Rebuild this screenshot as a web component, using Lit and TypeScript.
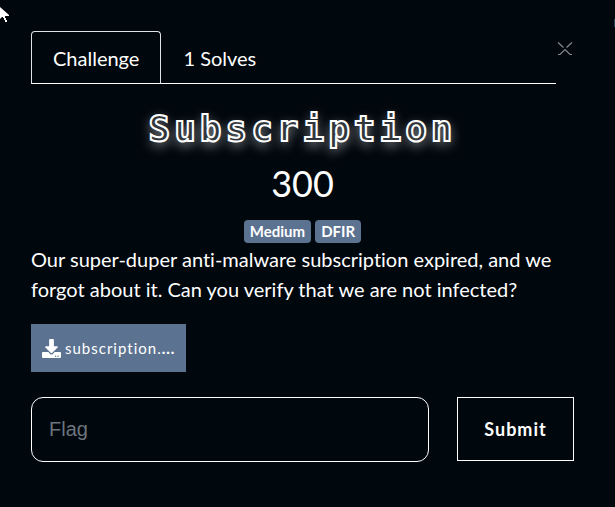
import { LitElement, html, css, svg } from "lit";
import { customElement, state } from "lit/decorators.js";

@customElement("app-root")
export class AppRoot extends LitElement {
  @state() private tab = "challenge";

  static styles = css`
    :host {
      display: block;
      box-sizing: border-box;
      min-height: 100vh;
      position: relative;
      padding: 31px 41px 45px 31px;
      background: #00070d;
      color: #fff;
      font: 20px/30px Lato, "Open Sans", sans-serif;
      font-variant-ligatures: none;
    }
    * { box-sizing: border-box; }
    button { font: inherit; font-variant-ligatures: none; color: inherit; background: none; cursor: pointer; }
    .cursor { position: absolute; left: 0; top: 6px; width: 10px; height: 17px; }
    .edge { position: absolute; right: 0; top: 19px; width: 1px; height: 8px; background: #24445a; }
    .top { display: flex; align-items: flex-start; }
    .tabs { display: flex; flex: 1; border-bottom: 1px solid #fff; }
    .tab {
      height: 53px;
      margin: 0 0 -1px;
      padding: 0 21px;
      border: 1px solid transparent;
      border-radius: 4px 4px 0 0;
    }
    .tab.active { border-color: #dee2e6 #dee2e6 #fff; }
    .close { width: 18px; height: 36px; margin: 0; padding: 0; border: 0; line-height: 0; }
    .close svg { width: 16px; height: 16px; }
    h1 {
      margin: 20px 0 0;
      font: bold 36px/50px "DejaVu Sans Mono", monospace;
      letter-spacing: 4px;
      text-align: center;
      color: #30363b;
      -webkit-text-stroke: 2px #fff;
      text-shadow: 0 4px 12px rgba(255, 255, 255, 0.6);
    }
    .points { margin: 7px 0 0; font-size: 36px; line-height: 44px; font-weight: 400; text-align: center; }
    .tags { display: flex; justify-content: center; gap: 4px; margin-top: 15px; }
    .tag { padding: 0 6px; border-radius: 4px; background: #5b7290; font-size: 15px; line-height: 23px; font-weight: 700; }
    p { margin: 1px 0 20px; }
    .file {
      display: inline-flex;
      align-items: center;
      gap: 4px;
      height: 48px;
      padding: 0 11px;
      background: #5b7290;
      color: #fff;
      font-size: 15px;
      letter-spacing: 1px;
      text-decoration: none;
    }
    .file b { font-weight: 900; }
    .file svg { width: 19px; height: 19px; }
    form { display: grid; grid-template-columns: minmax(0, 1fr) 117px; gap: 28px; margin-top: 25px; align-items: start; }
    input {
      width: 100%;
      height: 65px;
      padding: 0 17px;
      border: 1px solid #fff;
      border-radius: 12px;
      background: transparent;
      color: #fff;
      font: 20px "Liberation Sans", sans-serif;
    }
    input::placeholder { color: #6c757d; opacity: 1; }
    .submit { height: 64px; padding: 0; border: 1px solid #fff; font-size: 18px; font-weight: 700; letter-spacing: 1px; }
  `;

  private renderTab(id: string, label: string) {
    const on = this.tab === id;
    return html`<button class="tab ${on ? "active" : ""}" role="tab" aria-selected=${on}
      @click=${() => (this.tab = id)}>${label}</button>`;
  }

  render() {
    return html`
      <svg class="cursor" viewBox="0 0 10 17" aria-hidden="true">
        ${svg`<path fill="#fff" d="M0 1L9 9V10H5V12H6V14H7V16H5V14H4V12H3V11H2L0 13Z"/>`}
      </svg>
      <span class="edge"></span>
      <div class="top">
        <div class="tabs" role="tablist">
          ${this.renderTab("challenge", "Challenge")}${this.renderTab("solves", "1 Solves")}
        </div>
        <button class="close" aria-label="Close">
          <svg viewBox="0 0 16 16" fill="none" stroke="#85898c" stroke-width="1.2">
            <path d="M1 1.500L6.500 6.500M15 1.500L9.500 6.500M1 13.500H3L8 8.500L13 13.500H15"/>
          </svg>
        </button>
      </div>
      <h1>Subscription</h1>
      <h2 class="points">300</h2>
      <div class="tags"><span class="tag">Medium</span><span class="tag">DFIR</span></div>
      <p>Our super-duper anti-malware subscription expired, and we forgot about it. Can you verify that we are not infected?</p>
      <a class="file" href="#">
        <svg viewBox="0 0 512 512" fill="#fff" aria-hidden="true">
          <path d="M216 0h80c13.300 0 24 10.700 24 24v168h87.700c17.800 0 26.700 21.500 14.100 34.100L269.700 378.300c-7.500 7.500-19.800 7.500-27.300 0L90.100 226.100c-12.600-12.600-3.700-34.100 14.100-34.100H192V24c0-13.300 10.700-24 24-24zm296 376v112c0 13.300-10.700 24-24 24H24c-13.300 0-24-10.700-24-24V376c0-13.300 10.700-24 24-24h146.700l49 49c20.100 20.100 52.500 20.100 72.600 0l49-49H488c13.300 0 24 10.700 24 24zm-124 88c0-11-9-20-20-20s-20 9-20 20 9 20 20 20 20-9 20-20zm64 0c0-11-9-20-20-20s-20 9-20 20 9 20 20 20 20-9 20-20z"/>
        </svg>
        <span>subscription.<b>...</b></span>
      </a>
      <form @submit=${(e: Event) => e.preventDefault()}>
        <input type="text" placeholder="Flag" aria-label="Flag" />
        <button class="submit" type="submit">Submit</button>
      </form>
    `;
  }
}
